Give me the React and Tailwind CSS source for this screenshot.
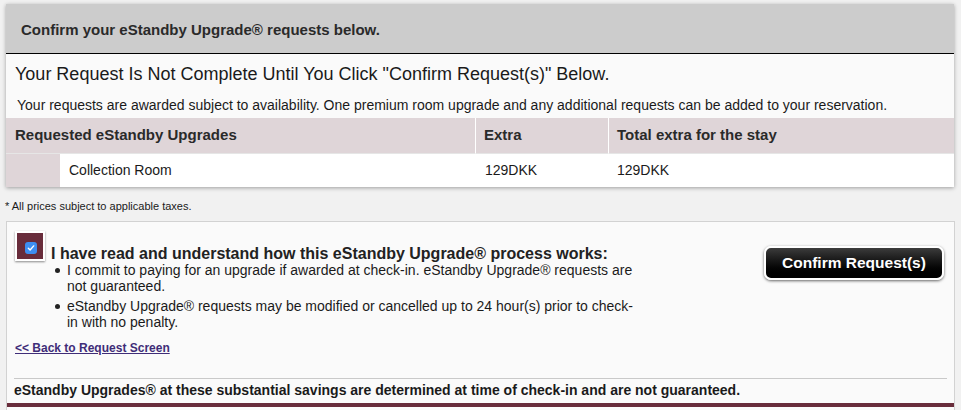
export default function App() {
  return (
    <div className="h-[410px] w-[961px] overflow-hidden bg-[#f1f1f1] font-['Liberation_Sans',Arial,sans-serif] text-[#222]">
      <div className="pt-[4px]">
        {/* Top card */}
        <div className="ml-[6px] w-[948px] bg-[#fafafa] shadow-[0_1px_4px_rgba(0,0,0,0.35)]">
          <div className="flex h-[50px] items-center border-b border-black bg-[#cccccc] pl-[15px] pt-[3px] text-[15px] font-bold text-[#2a2a2a]">
            Confirm your eStandby Upgrade® requests below.
          </div>
          <div className="pl-[9px] pt-[9px] text-[18px] leading-[22px] text-[#1a1a1a]">
            Your Request Is Not Complete Until You Click "Confirm Request(s)" Below.
          </div>
          <div className="pl-[11px] pt-[12px] pb-[4px] text-[14px] leading-[17px] text-[#1a1a1a]">
            Your requests are awarded subject to availability. One premium room upgrade and any additional requests can be added to your reservation.
          </div>
          <div className="grid grid-cols-[470px_133px_1fr] text-[14px]">
            <div className="flex h-[36px] items-center border-b border-r border-b-[#e6e6e6] border-r-white bg-[#dfd5d8] pl-[9px] text-[15px] font-bold text-[#2a2a2a]">
              Requested eStandby Upgrades
            </div>
            <div className="flex h-[36px] items-center border-b border-r border-b-[#e6e6e6] border-r-white bg-[#dfd5d8] pl-[8px] text-[15px] font-bold text-[#2a2a2a]">
              Extra
            </div>
            <div className="flex h-[36px] items-center border-b border-b-[#e6e6e6] bg-[#dfd5d8] pl-[8px] text-[15px] font-bold text-[#2a2a2a]">
              Total extra for the stay
            </div>
            <div className="flex h-[33px] items-stretch bg-white">
              <div className="w-[54px] bg-[#dfd5d8]" />
              <div className="flex items-center pl-[9px] text-[#1a1a1a]">Collection Room</div>
            </div>
            <div className="flex h-[33px] items-center bg-white pl-[9px] text-[#1a1a1a]">129DKK</div>
            <div className="flex h-[33px] items-center bg-white pl-[8px] text-[#1a1a1a]">129DKK</div>
          </div>
        </div>

        <div className="mt-[13px] pl-[5px] text-[11px] leading-[12px] text-[#1a1a1a]">
          * All prices subject to applicable taxes.
        </div>

        {/* Bottom card */}
        <div className="ml-[6px] mt-[9px] w-[949px] border border-[#d2d2d2] bg-[#fafafa] pb-[20px]">
          <div className="flex justify-between">
            <div className="pl-[8px] pt-[9px]">
              <div className="flex items-end gap-[6px]">
                <div className="flex h-[30px] w-[30px] items-center justify-center border-2 border-white bg-[#682c3b] shadow-[0_1px_2px_rgba(0,0,0,0.45)]">
                  <div className="mt-[3px] ml-[1px] flex h-[12px] w-[12px] items-center justify-center rounded-[3px] bg-[#3d8ef2]">
                    <svg width="8" height="8" viewBox="0 0 8 8">
                      <path d="M1.3 4.2 L3.1 6 L6.7 1.9" fill="none" stroke="white" strokeWidth="1.4" strokeLinecap="round" strokeLinejoin="round" />
                    </svg>
                  </div>
                </div>
                <div className="mb-[-2px] text-[16px] font-bold leading-[19px] text-[#222]">
                  I have read and understand how this eStandby Upgrade® process works:
                </div>
              </div>
              <ul className="w-[640px] pl-[40px] text-[14px] leading-[16px] text-[#1a1a1a]">
                <li className="mt-[1px] flex">
                  <span className="mt-[6px] mr-[7px] h-[5px] w-[5px] shrink-0 rounded-full bg-[#222]" />
                  <span>I commit to paying for an upgrade if awarded at check-in. eStandby Upgrade® requests are not guaranteed.</span>
                </li>
                <li className="mt-[4px] flex">
                  <span className="mt-[6px] mr-[7px] h-[5px] w-[5px] shrink-0 rounded-full bg-[#222]" />
                  <span>
                    eStandby Upgrade® requests may be modified or cancelled up to 24 hour(s) prior to check-
                    <br />
                    in with no penalty.
                  </span>
                </li>
              </ul>
              <a href="#" className="mt-[11px] block text-[12px] font-bold leading-[14px] text-[#3f2d78] underline">
                &lt;&lt; Back to Request Screen
              </a>
            </div>
            <div className="pr-[10px] pt-[24px]">
              <button className="h-[34px] w-[180px] rounded-[7px] border-2 border-white bg-gradient-to-b from-[#3c3c3c] to-[#000] text-[15.5px] font-bold text-white shadow-[0_1px_3px_rgba(0,0,0,0.6)]">
                Confirm Request(s)
              </button>
            </div>
          </div>
          <div className="mx-[7px] mt-[23px] border-t border-[#c9c9c9] pt-[3px] text-[14px] font-bold leading-[17px] text-[#1a1a1a]">
            eStandby Upgrades® at these substantial savings are determined at time of check-in and are not guaranteed.
          </div>
          <div className="mt-[4px] h-[4px] bg-[#682c3b]" />
        </div>
      </div>
    </div>
  );
}
